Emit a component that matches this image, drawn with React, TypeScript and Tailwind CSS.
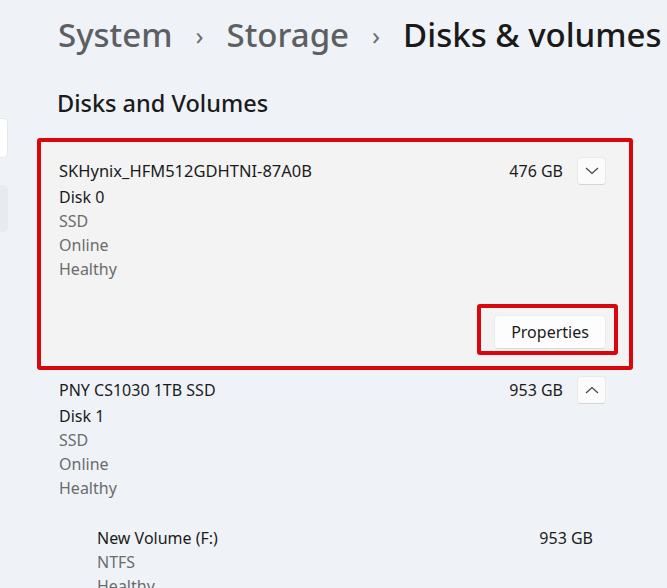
import React from "react";

const font = { fontFamily: '"Noto Sans", "Open Sans", sans-serif' };

function ChevronBtn({ up }: { up?: boolean }) {
  return (
    <div className="w-[29px] h-[28px] bg-[#fbfbfb] rounded-[4px] border border-[#e9e9e9] border-b-[#d6d6d6] flex items-center justify-center">
      <svg width="14" height="8" viewBox="0 0 14 8" fill="none">
        {up ? (
          <path d="M1 7 L7 1.5 L13 7" stroke="#444" strokeWidth="1.2" />
        ) : (
          <path d="M1 1 L7 6.5 L13 1" stroke="#444" strokeWidth="1.2" />
        )}
      </svg>
    </div>
  );
}

export default function App() {
  return (
    <div
      className="w-[667px] h-[588px] bg-[#eff3f8] overflow-hidden flex items-start text-[#1b1b1b]"
      style={font}
    >
      <div className="w-[8px] shrink-0">
        <div className="mt-[118px] h-[40px] bg-white rounded-r-[5px] border border-l-0 border-[#e4e7ec]" />
        <div className="mt-[27px] h-[47px] bg-[#e7eaef] rounded-r-[5px]" />
      </div>
      <div className="flex-1 pl-[29px]">
        <div className="pl-[21px] h-[74px] pt-[12px] flex items-start gap-[23px] text-[33px] leading-[46px] whitespace-nowrap">
          <span className="text-[#5d5f63] font-medium">System</span>
          <span className="text-[#6a6d72] text-[26px]">›</span>
          <span className="text-[#5d5f63] font-medium">Storage</span>
          <span className="text-[#6a6d72] text-[26px]">›</span>
          <span className="text-[#1a1a1a] font-medium">Disks &amp; volumes</span>
        </div>
        <div className="mt-[14px] pl-[20px] text-[23.5px] leading-[30px] font-medium text-[#1b1b1b]">
          Disks and Volumes
        </div>
        <div className="mt-[20px] w-[596px] border-[4px] border-[#d9060c] rounded-[3px]">
          <div className="bg-[#f3f3f4] pl-[18px] pr-[23px] pt-[15px] pb-[17px]">
            <div className="flex items-center justify-between h-[28px]">
              <span className="text-[16.5px]">SKHynix_HFM512GDHTNI-87A0B</span>
              <div className="flex items-center gap-[14px]">
                <span className="text-[16px]">476 GB</span>
                <ChevronBtn />
              </div>
            </div>
            <div className="text-[16px] leading-[24px]">
              <div>Disk 0</div>
              <div className="text-[#6c6c6c]">SSD</div>
              <div className="text-[#6c6c6c]">Online</div>
              <div className="text-[#6c6c6c]">Healthy</div>
            </div>
            <div className="mt-[34px] flex justify-end">
              <div className="relative">
                <div className="w-[112px] h-[34px] bg-[#fdfdfd] rounded-[4px] border border-[#ececec] border-b-[#d9d9d9] flex items-center justify-center text-[16px]">
                  Properties
                </div>
                <div className="absolute left-[-17px] top-[-11px] w-[141px] h-[51px] border-[4px] border-[#d9060c] rounded-[3px]" />
              </div>
            </div>
          </div>
        </div>
        <div className="w-[596px] pl-[22px] pr-[27px] pt-[6px]">
          <div className="flex items-center justify-between h-[28px]">
            <span className="text-[16px]">PNY CS1030 1TB SSD</span>
            <div className="flex items-center gap-[14px]">
              <span className="text-[16px]">953 GB</span>
              <ChevronBtn up />
            </div>
          </div>
          <div className="text-[16px] leading-[24px]">
            <div>Disk 1</div>
            <div className="text-[#6c6c6c]">SSD</div>
            <div className="text-[#6c6c6c]">Online</div>
            <div className="text-[#6c6c6c]">Healthy</div>
          </div>
          <div className="mt-[26px] pl-[38px] pr-[13px] text-[16px] leading-[24px]">
            <div className="flex justify-between">
              <span>New Volume (F:)</span>
              <span>953 GB</span>
            </div>
            <div className="text-[#6c6c6c]">NTFS</div>
            <div className="text-[#6c6c6c]">Healthy</div>
          </div>
        </div>
      </div>
    </div>
  );
}
